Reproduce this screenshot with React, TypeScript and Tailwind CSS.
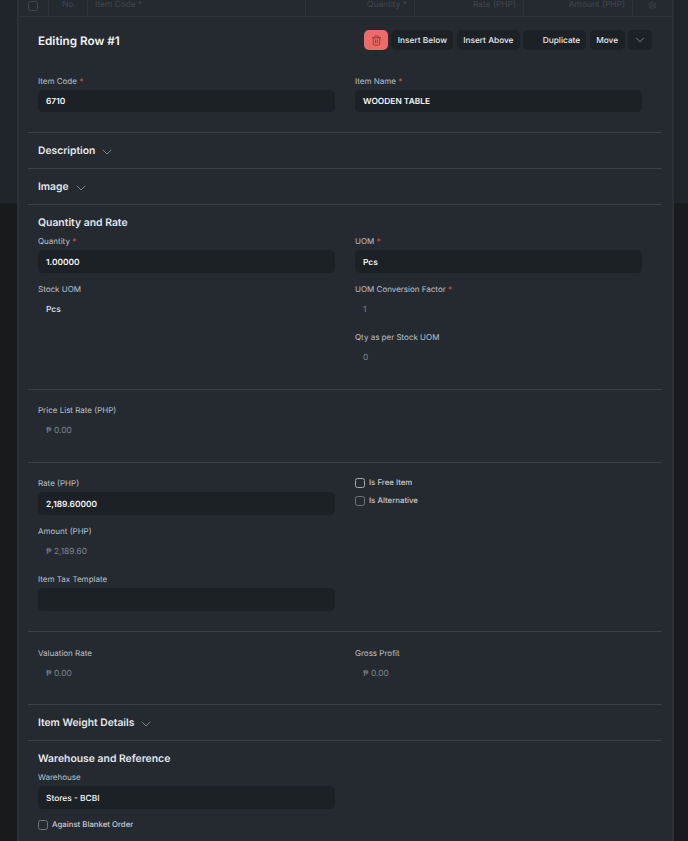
import React from 'react';
import { ChevronDown, Trash2, Settings } from 'lucide-react';

const Label = ({ text, req }: { text: string; req?: boolean }) => (
    <div className="h-[16px] mb-[1px] text-[8px] leading-[16px] text-[#bcc3c9]">
        {text}
        {req && <span className="text-[#e24c4c]"> *</span>}
    </div>
);

const Input = ({ label, value, req, bold, h = 'h-[23px] leading-[27px]' }: { label: string; value?: string; req?: boolean; bold?: boolean; h?: string }) => (
    <div>
        <Label text={label} req={req} />
        <div className={`${h} rounded-[5px] bg-[#1c2126] px-[8px] text-[8.4px] text-[#f4f5f6] ${bold ? 'font-semibold' : 'font-medium'}`}>
            {value}
        </div>
    </div>
);

const ReadOnly = ({ label, value, req, dark }: { label: string; value: string; req?: boolean; dark?: boolean }) => (
    <div>
        <Label text={label} req={req} />
        <div className={`h-[23px] px-[8px] text-[8.4px] leading-[25px] ${dark ? 'text-[#e2e6e9] font-medium' : 'text-[#7c858d]'}`}>
            {value}
        </div>
    </div>
);

const Check = ({ label, bright }: { label: string; bright?: boolean }) => (
    <div className="flex items-center gap-[4px] h-[12px]">
        <span className={`w-[8px] h-[8px] box-content rounded-[2.5px] border ${bright ? 'border-[#a3aab0]' : 'border-[#6f777e]'}`} />
        <span className="text-[7.8px] font-medium text-[#c7ccd1]">{label}</span>
    </div>
);

const Collapse = ({ title }: { title: string }) => (
    <div className="h-[36px] border-t border-[#3b4148] pl-[10px] flex items-center gap-[4px]">
        <span className="text-[10.3px] font-semibold text-[#e5e8ea] mt-[2px]">{title}</span>
        <ChevronDown size={16} strokeWidth={1} className="text-[#a6adb3] mt-[3px]" />
    </div>
);

const ToolBtn = ({ text, w }: { text: string; w: string }) => (
    <div className={`${w} h-[20px] rounded-[5px] bg-[#1c2126] text-[8.3px] leading-[22px] font-medium text-[#e8eaec] text-center whitespace-nowrap`}>{text}</div>
);

const Heading = ({ text }: { text: string }) => (
    <div className="h-[16px] mb-[3px] text-[10.4px] leading-[18px] font-semibold text-[#e5e8ea]">{text}</div>
);

const HeadCell = ({ text, w, right }: { text: string; w: string; right?: boolean }) => (
    <div className={`${w} h-full border-l border-[#2d3339] ${right ? 'text-right pr-[7px]' : 'pl-[7px]'}`}>{text}</div>
);

const cols = 'grid grid-cols-[297px_287px] gap-x-[20px]';

export default function App() {
    return (
        <div className="h-[841px] w-[688px] overflow-hidden flex bg-[#232830] font-['Inter',sans-serif] [text-rendering:geometricPrecision]">
            <div className="w-[17px] flex flex-col">
                <div className="h-[203px] bg-[#20252b]" />
                <div className="flex-1 bg-[#171b1e]" />
            </div>
            <div className="w-[657px] bg-[#252a31] border-x-2 border-[#2c3138]">
                {/* grid header behind the row form */}
                <div className="h-[17px] border-b border-[#2d3339] flex text-[8.4px] leading-[11px] text-[#42484f]">
                    <div className="w-[29px] pl-[9px] pt-[1px]">
                        <div className="w-[8px] h-[8px] box-content border border-[#42484f] rounded-[2.5px]" />
                    </div>
                    <div className="w-[39px] pl-[13px] border-l border-[#2d3339] h-full">No.</div>
                    <HeadCell text="Item Code *" w="w-[218px]" />
                    <HeadCell text="Quantity *" w="w-[109px]" right />
                    <HeadCell text="Rate (PHP)" w="w-[109px]" right />
                    <HeadCell text="Amount (PHP)" w="w-[109px]" right />
                    <div className="flex-1 border-l border-[#2d3339] h-full flex justify-center pt-[1px]">
                        <Settings size={9} />
                    </div>
                </div>

                <div className="ml-[9px] mr-[10px]">
                    <div className="pb-[20px]">
                        <div className="flex items-center justify-between h-[46px] pl-[10px] pr-[10px]">
                            <span className="text-[11.7px] font-semibold text-[#f4f5f6] mt-[4px]">Editing Row #1</span>
                            <div className="flex items-center gap-[3.4px]">
                                <div className="w-[24px] h-[20px] rounded-[5px] bg-[#ec6a68] flex items-center justify-center">
                                    <Trash2 size={11} className="text-[#93393a]" />
                                </div>
                                <ToolBtn text="Insert Below" w="w-[62px]" />
                                <ToolBtn text="Insert Above" w="w-[63px]" />
                                <div className="w-[63px] h-[20px] rounded-[5px] bg-[#1c2126] text-[8.3px] leading-[22px] font-medium text-[#e8eaec] text-right pr-[6px]">Duplicate</div>
                                <ToolBtn text="Move" w="w-[35px]" />
                                <div className="w-[24px] h-[20px] rounded-[5px] bg-[#1c2126] flex items-center justify-center">
                                    <ChevronDown size={14} strokeWidth={1} className="text-[#c0c6cc]" />
                                </div>
                            </div>
                        </div>
                        <div className={`${cols} pt-[10px] pl-[10px]`}>
                            <Input label="Item Code" value="6710" req bold h="h-[22px] leading-[24px]" />
                            <Input label="Item Name" value="WOODEN TABLE" req bold h="h-[22px] leading-[24px]" />
                        </div>
                    </div>

                    <Collapse title="Description" />
                    <Collapse title="Image" />

                    <div className="border-t border-[#3b4148] pl-[10px] pt-[9px] pb-[20px]">
                        <Heading text="Quantity and Rate" />
                        <div className={cols}>
                            <div className="flex flex-col gap-[8px]">
                                <Input label="Quantity" value="1.00000" req bold />
                                <ReadOnly label="Stock UOM" value="Pcs" dark />
                            </div>
                            <div className="flex flex-col gap-[8px]">
                                <Input label="UOM" value="Pcs" req bold />
                                <ReadOnly label="UOM Conversion Factor" value="1" req />
                                <ReadOnly label="Qty as per Stock UOM" value="0" />
                            </div>
                        </div>
                    </div>

                    <div className="border-t border-[#3b4148] pl-[10px] pt-[12px] pb-[20px]">
                        <ReadOnly label="Price List Rate (PHP)" value="₱ 0.00" />
                    </div>

                    <div className="border-t border-[#3b4148] pl-[10px] pt-[12px] pb-[20px]">
                        <div className={cols}>
                            <div className="flex flex-col gap-[8px]">
                                <Input label="Rate (PHP)" value="2,189.60000" bold />
                                <ReadOnly label="Amount (PHP)" value="₱ 2,189.60" />
                                <Input label="Item Tax Template" />
                            </div>
                            <div className="flex flex-col gap-[6px] pt-[2px]">
                                <Check label="Is Free Item" bright />
                                <Check label="Is Alternative" />
                            </div>
                        </div>
                    </div>

                    <div className="border-t border-[#3b4148] pl-[10px] pt-[13px] pb-[19px]">
                        <div className={cols}>
                            <ReadOnly label="Valuation Rate" value="₱ 0.00" />
                            <ReadOnly label="Gross Profit" value="₱ 0.00" />
                        </div>
                    </div>

                    <Collapse title="Item Weight Details" />

                    <div className="border-t border-[#3b4148] pl-[10px] pt-[9px]">
                        <Heading text="Warehouse and Reference" />
                        <div className={cols}>
                            <div className="flex flex-col gap-[10px]">
                                <Input label="Warehouse" value="Stores - BCBI" />
                                <Check label="Against Blanket Order" />
                            </div>
                        </div>
                    </div>
                </div>
            </div>
            <div className="flex-1 flex flex-col">
                <div className="h-[203px] bg-[#20252b]" />
                <div className="flex-1 bg-[#171b1e]" />
            </div>
        </div>
    );
}
